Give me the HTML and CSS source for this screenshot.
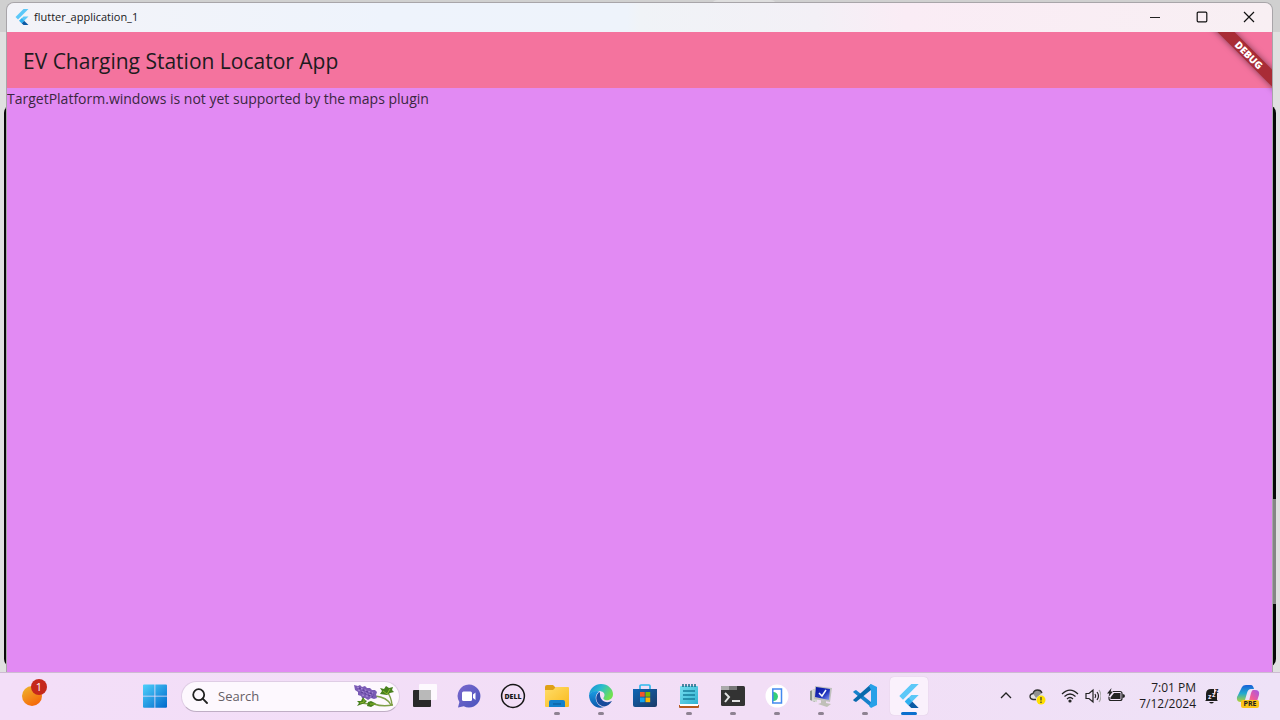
FILE: index.html
```html
<!DOCTYPE html>
<html lang="en">
<head>
<meta charset="utf-8">
<meta name="viewport" content="width=device-width, initial-scale=1">
<title>flutter_application_1</title>
<link rel="stylesheet" href="styles.css">
</head>
<body>
<svg class="defs" width="0" height="0" aria-hidden="true">
  <defs>
    <symbol id="flutter" viewBox="0 0 24 24">
      <path fill="#5cc8f8" d="M14.3 0 2.3 12 6 15.700 21.700 0zM14.300 11.100 7.800 17.500 11.500 21.200 21.700 11.100z"/>
      <path fill="#0b5aa5" d="M11.500 21.200 14.300 24h7.400l-6.500-6.500z"/>
      <path fill="#2fb0f0" d="M7.800 17.500l3.700-3.700 3.700 3.700-3.700 3.700z"/>
    </symbol>
    <linearGradient id="gWin" x1="0" y1="0" x2="1" y2="1"><stop offset="0" stop-color="#4fd0fb"/><stop offset="1" stop-color="#0069cc"/></linearGradient>
    <linearGradient id="gSun" x1="0" y1="0" x2=".6" y2="1"><stop offset="0" stop-color="#eeb92f"/><stop offset="1" stop-color="#f5680a"/></linearGradient>
    <linearGradient id="gChat" x1="0" y1="0" x2="1" y2="1"><stop offset="0" stop-color="#7b68cd"/><stop offset="1" stop-color="#4854bd"/></linearGradient>
    <linearGradient id="gFolder" x1="0" y1="0" x2="1" y2="1"><stop offset="0" stop-color="#ffdd69"/><stop offset="1" stop-color="#fab91c"/></linearGradient>
    <linearGradient id="gEdge" x1="0" y1="0" x2="1" y2=".5"><stop offset="0" stop-color="#1687d9"/><stop offset=".5" stop-color="#2bbccd"/><stop offset="1" stop-color="#70e052"/></linearGradient>
    <linearGradient id="gEdge2" x1="0" y1="0" x2="0" y2="1"><stop offset="0" stop-color="#1b9de2"/><stop offset="1" stop-color="#0b56ab"/></linearGradient>
    <linearGradient id="gStore" x1="0" y1="0" x2="1" y2="1"><stop offset="0" stop-color="#0f65b5"/><stop offset="1" stop-color="#1b3a67"/></linearGradient>
    <linearGradient id="gNote" x1="0" y1="0" x2="1" y2="1"><stop offset="0" stop-color="#78def0"/><stop offset="1" stop-color="#2bb0cf"/></linearGradient>
    <linearGradient id="gScreen" x1="0" y1="0" x2="1" y2="1"><stop offset="0" stop-color="#0713a0"/><stop offset=".6" stop-color="#1f34bd"/><stop offset="1" stop-color="#8c9df5"/></linearGradient>
    <linearGradient id="gCoA" x1="0" y1="0" x2="0" y2="1"><stop offset="0" stop-color="#1660d9"/><stop offset=".5" stop-color="#23a9ce"/><stop offset="1" stop-color="#b7d331"/></linearGradient>
    <linearGradient id="gCoB" x1="1" y1="0" x2="0" y2="1"><stop offset="0" stop-color="#a458e8"/><stop offset=".5" stop-color="#ee5b9a"/><stop offset="1" stop-color="#ff9b52"/></linearGradient>
  </defs>
</svg>

<div class="desktop">
  <div class="backdrop-bar"></div>
  <div class="backdrop-tab"></div>
  <div class="backdrop-frame"></div>
  <div class="backdrop-thumb"></div>

  <main class="window">
    <header class="titlebar">
      <svg class="title-icon" aria-hidden="true"><use href="#flutter"/></svg>
      <span class="title-text">flutter_application_1</span>
      <div class="caption-buttons">
        <button class="caption" aria-label="Minimize"><svg width="12" height="12" viewBox="0 0 12 12"><path d="M1 6.500h10" stroke="#222"/></svg></button>
        <button class="caption" aria-label="Maximize"><svg width="12" height="12" viewBox="0 0 12 12"><rect x="1.200" y="1.200" width="9.600" height="9.600" rx="1" fill="none" stroke="#111" stroke-width="1.200"/></svg></button>
        <button class="caption" aria-label="Close"><svg width="12" height="12" viewBox="0 0 12 12"><path d="M1 1l10 10M11 1 1 11" stroke="#111" stroke-width="1.200"/></svg></button>
      </div>
    </header>
    <section class="app">
      <header class="appbar"><h1 class="app-title">EV Charging Station Locator App</h1></header>
      <p class="message">TargetPlatform.windows is not yet supported by the maps plugin</p>
      <div class="banner-clip"><span class="banner">DEBUG</span></div>
    </section>
  </main>
</div>

<footer class="taskbar">
  <button class="widgets" aria-label="Widgets">
    <svg width="22" height="22" viewBox="0 0 22 22"><circle cx="11" cy="11" r="10" fill="url(#gSun)"/></svg>
    <span class="badge">1</span>
  </button>

  <nav class="pinned">
    <button class="task" aria-label="Start"><svg width="24" height="24" viewBox="0 0 24 24"><path fill="url(#gWin)" d="M0 1.500Q0 .500 1 .500h10.500v11.200H0zM12.300.500H23q1 0 1 1v10.200H12.300zM0 12.500h11.500v11.200H1q-1 0-1-1zM12.300 12.500H24v10.200q0 1-1 1H12.300z"/></svg></button>

    <label class="search">
      <svg width="16" height="16" viewBox="0 0 16 16" fill="none" stroke="#202020" stroke-width="1.800"><circle cx="6.700" cy="6.700" r="5.500"/><path d="m10.700 10.700 4.300 4.300" stroke-linecap="round"/></svg>
      <input class="search-input" type="text" placeholder="Search" aria-label="Search">
      <svg width="42" height="24" viewBox="0 0 42 24">
        <path d="M22 12Q34 13 38 21M39 21Q38 12 34 8M40 21Q29 23 21 20Q14 20 8 19" fill="none" stroke="#7fa048" stroke-width="1.400"/>
        <path d="M1 1 5 2 7 1 9 3 12 2 14 4 17 4 19 6 22 6 24 8 23 11 24 14 21 15 18 14 15 16 12 14 9 14 8 12 5 11 5 8 2 6z" fill="#7a5bb5"/>
        <path d="M4 3 20 9M5 6l13 5M9 11l9 2" stroke="#a98bd6" stroke-width="1.200" stroke-dasharray="2 2"/>
        <path d="M6 4 21 11M8 8l12 5" stroke="#5b3f97" stroke-width="1.200" stroke-dasharray="2 2"/>
        <path d="M34 11 27 10l2-3-2-3 4 1 2-3 3 2 4-1-1 3 2 2-4 1zM12 19l-8 3 2-3-2-2 4 0 2-4 2 3 2 1zM15 18l3-1 4 2 1 1-5 3-4-1z" fill="#47801d"/>
        <path d="M30 7l4 3 3-5M7 19l4-1 0-3M17 20h5" fill="none" stroke="#8fb62f"/>
      </svg>
    </label>

    <button class="task" aria-label="Task view"><svg width="26" height="26" viewBox="0 0 26 26"><rect x="1" y="7" width="18" height="17" rx="1" fill="#292929"/><rect x="7" y="1" width="18" height="16" rx="1" fill="#fff" fill-opacity=".82"/><path d="M7 7h12v10H7z" fill="#b9b9b9"/></svg></button>
    <button class="task" aria-label="Chat"><svg width="24" height="24" viewBox="0 0 24 24"><path fill="url(#gChat)" d="M12 .500a11.500 11.500 0 1 1-5.200 21.800L1 23.500l1.400-5.400A11.500 11.500 0 0 1 12 .500z"/><rect x="5" y="7.500" width="10" height="9.500" rx="1.500" fill="#fff"/><path d="m16 10.500 2.500-2v7.500L16 14z" fill="#fff"/></svg></button>
    <button class="task" aria-label="Dell"><svg width="26" height="26" viewBox="0 0 26 26"><circle cx="13" cy="13" r="11.400" fill="none" stroke="#161616" stroke-width="1.500"/><text class="dell" x="13" y="16" text-anchor="middle">DELL</text></svg></button>
    <button class="task is-running" aria-label="File Explorer"><svg width="26" height="26" viewBox="0 0 26 26"><path fill="#dfa016" d="M1 4q0-2 2-2h6l3 3v4H1z"/><path fill="url(#gFolder)" d="M1 7h8l3-3h12q1 0 1 1v18q0 1-1 1H2q-1 0-1-1z"/><path fill="#1480cc" d="M5 24v-5q0-2 2-2h12q2 0 2 2v5z"/><path fill="none" stroke="#0a5591" d="M9 21h8"/></svg></button>
    <button class="task is-running" aria-label="Edge"><svg width="26" height="26" viewBox="0 0 26 26"><path fill="url(#gEdge)" d="M1 12C2 5 7 1 13 1c7 0 12 5 12 10 0 5-4 7-8 6-2-1-2-2-1-3 2-4-2-6-5-6-4 0-8 1-10 4z"/><path fill="url(#gEdge2)" d="M1 12c2-4 8-5 11-3-3 0-5 4-4 8 1 4 4 7 8 7C8 27 1 20 1 12z"/><path fill="#174b9b" d="M12 9c-5 2-5 10 0 13 4 3 9 1 12-4-6 3-13 0-12-9z"/></svg></button>
    <button class="task" aria-label="Microsoft Store"><svg width="26" height="26" viewBox="0 0 26 26"><path fill="none" stroke="#30b9ed" stroke-width="1.700" d="M8 8V3q0-1 1-1h8q1 0 1 1v5"/><path fill="url(#gStore)" d="M1 6h24v16q0 2-2 2H3q-2 0-2-2z"/><path fill="#f2552c" d="M8 9h4.700v4.700H8z"/><path fill="#7eb900" d="M13.500 9h4.700v4.700h-4.700z"/><path fill="#12a4ec" d="M8 14.500h4.700v4.700H8z"/><path fill="#fdb900" d="M13.500 14.500h4.700v4.700h-4.700z"/></svg></button>
    <button class="task is-running" aria-label="Notepad"><svg width="22" height="26" viewBox="0 0 22 26"><rect x="2" y="3" width="18" height="20" rx="1" fill="url(#gNote)"/><path fill="#b55a1d" d="M1 22h20v2q0 1-1 1H2q-1 0-1-1z"/><path fill="#fff" d="M2 21h18v2H2z"/><path d="M5 1v3M8 1v3M11 1v3M14 1v3M17 1v3" stroke="#166985" stroke-width="1.500"/><path d="M5 8h12M5 12h12M5 16h12" stroke="#177e9c" stroke-width="1.400"/></svg></button>
    <button class="task is-running" aria-label="Terminal"><svg width="26" height="26" viewBox="0 0 26 26"><rect x="1" y="3" width="24" height="20" rx="1.500" fill="#333"/><path fill="#aaa" d="M1 7V4q0-1 1-1h7v4z"/><path fill="#777" d="M9 3h8v4H9z"/><path d="m5 10 4 4-4 5M12 18h8" fill="none" stroke="#e2e2e2" stroke-width="2"/></svg></button>
    <button class="task is-running" aria-label="Device emulator"><svg width="24" height="24" viewBox="0 0 24 24"><circle cx="12" cy="12" r="11.500" fill="#fff"/><path fill="#35cf77" d="M8 8a5 5 0 0 1 5 4.500A5 5 0 0 1 8 17z"/><rect x="7.800" y="5" width="8.700" height="14" fill="none" stroke="#4389ef" stroke-width="1.500"/></svg></button>
    <button class="task is-running" aria-label="Remote desktop"><svg width="24" height="24" viewBox="0 0 24 24"><path fill="#8a968c" d="M1 7 6 5V18L1 16z"/><path fill="#d3d6d0" d="M3 6 8 4V18L3 17z"/><path fill="#bfc0bd" d="M6 2 23 4 21 18 5 15z"/><path fill="url(#gScreen)" d="M7 3 21 5 20 16 6 13z"/><path fill="#c0c0b8" d="M12 16 17 17 17 19 22 20 18 23 9 20 12 19z"/><path d="M10 9 13 12 17 6" fill="none" stroke="#f8faff" stroke-width="1.500"/></svg></button>
    <button class="task is-running" aria-label="Visual Studio Code"><svg width="26" height="26" viewBox="0 0 26 26"><path fill="#1681cb" d="m2 8 2-1 15 12v5L1 9z"/><path fill="#0869ac" d="m1 17 18-16v6L4 19l-2-1z"/><path fill="#28a1e8" d="m19 1 6 3v18l-6 3-2-2 2-4V7l-2-4z"/></svg></button>
    <button class="task is-running is-active" aria-label="flutter_application_1"><svg width="24" height="24"><use href="#flutter"/></svg></button>
  </nav>

  <div class="tray">
    <button class="tray-button" aria-label="Show hidden icons"><svg width="14" height="14" viewBox="0 0 14 14"><path d="m2 9 5-5 5 5" fill="none" stroke="#222" stroke-width="1.300"/></svg></button>
    <button class="tray-button cloud" aria-label="OneDrive"><svg width="17" height="18" viewBox="0 0 17 18"><path d="M4 12.500Q1 12 1 9.500T4 6.500Q5 3 8.500 3 12 3 13 6q3 1 2 5l-3 1.500z" fill="#e6e2e8"/><path d="M4 6.500Q5 3 8.500 3 12 3 13 6L7 11z" fill="#929292"/><path d="M7 12.500H4Q1 12 1 9.500T4 6.500Q5 3 8.500 3 12 3 13 6" fill="none" stroke="#333" stroke-width="1.300"/><circle cx="12" cy="13" r="4.500" fill="#ffe000"/><path d="M12 10v3.500M12 14.500V16" stroke="#333" stroke-width="1.200"/></svg></button>
    <button class="quick" aria-label="Network, volume and battery">
      <svg width="18" height="16" viewBox="0 0 18 16" fill="none" stroke="#222" stroke-width="1.200"><path d="M1 6q8-8 16 0M3.500 8.500q5.500-5 11 0M6 11q3-3 6 0"/><circle cx="9" cy="13" r="1" fill="#222"/></svg>
      <svg width="16" height="16" viewBox="0 0 16 16" fill="none" stroke="#222" stroke-width="1.200"><path d="M1 5.500h3L8 2v12l-4-3.500H1zM10 6q1.500 2 0 4M12 4q3 4 0 8"/><path d="M14 2q4 6 0 12" stroke="#aaa"/></svg>
      <svg width="18" height="16" viewBox="0 0 18 16"><path d="M6 3.500h7q2 0 2 2v5q0 2-2 2H4q-2 0-2-2V9" fill="none" stroke="#222" stroke-width="1.200"/><path fill="#222" d="M7 5h6.500v6H3.500V9.500zM15.500 6Q18 6 18 8t-2.500 2zM4.500 0 0 5.500h2.300L1.500 9 6 3.500H3.700z"/></svg>
    </button>
    <button class="clock"><span>7:01 PM</span><span>7/12/2024</span></button>
    <button class="tray-button bell" aria-label="Notifications, do not disturb"><svg width="16" height="18" viewBox="0 0 16 18"><path fill="#1c1c1c" d="M2 13V7q0-5 5-5h3v4h3v7l1 1H1zM5 15h5q-2.500 3-5 0z"/><text class="snooze snooze-light" x="4" y="12">z</text><text class="snooze snooze-light" x="8" y="10">z</text><text class="snooze" x="11" y="6">z</text></svg></button>
    <button class="tray-button copilot" aria-label="Copilot"><svg width="24" height="24" viewBox="0 0 24 24"><path fill="url(#gCoA)" d="M6 3q1-2 4-2h5q2 0 3 4h-3q-3 0-4 4l-2 7q-1 2-4 2-5 0-4-5z"/><path fill="url(#gCoB)" d="M17 6h2q5 0 4 5l-2 6q-1 4-5 4H9q3 0 4-4l2-8q1-3 2-3z"/></svg><span class="pre">PRE</span></button>
  </div>
</footer>
</body>
</html>
```
FILE: styles.css
```css
* { box-sizing: border-box; }

body {
  margin: 0;
  min-height: 100vh;
  display: flex;
  flex-direction: column;
  font-family: "Open Sans", "Noto Sans", sans-serif;
  color: #1d1b20;
}

button {
  border: 0;
  padding: 0;
  background: none;
  font: inherit;
  color: inherit;
}

svg { display: block; flex: none; }
.defs { position: absolute; }

.desktop {
  position: relative;
  flex: 1;
  display: flex;
  padding: 2px 7px 0 6px;
  background: #e0e0e0;
  overflow: hidden;
}

/* Parts of the window that lies behind */
.backdrop-bar {
  position: absolute;
  inset: 0 0 auto;
  height: 32px;
  background: #d0d0d0;
}
.backdrop-tab {
  position: absolute;
  top: 0;
  left: 710px;
  width: 68px;
  height: 8px;
  border-radius: 8px 8px 0 0;
  background: #dedede;
}
.backdrop-frame {
  position: absolute;
  inset: 105px 4px 5px;
  border-radius: 8px;
  background: #080808;
}
.backdrop-thumb {
  position: absolute;
  right: 4px;
  bottom: 68px;
  width: 4px;
  height: 105px;
  background: #858585;
}

.window {
  position: relative;
  flex: 1;
  display: flex;
  flex-direction: column;
  border: 1px solid #a8a5a9;
  border-bottom: 0;
  border-radius: 8px 8px 0 0;
  overflow: hidden;
}
.titlebar {
  height: 29px;
  display: flex;
  align-items: center;
  padding: 0 0 2px 7px;
  background: linear-gradient(90deg, #f3f3f8 0%, #eef3fc 30%, #eef3fb 49%, #f0f3f7 50%, #f3f0f6 64%, #faecf5 71%, #f8eff3 100%);
}
.title-icon { width: 16px; height: 16px; }
.title-text {
  margin-left: 4px;
  font-size: 11px;
  line-height: 16px;
  color: #191919;
}
.caption-buttons { margin-left: auto; display: flex; }
.caption {
  width: 47px;
  height: 27px;
  display: grid;
  place-items: center;
}

.app {
  position: relative;
  flex: 1;
  background: #e28af3;
  overflow: hidden;
}
.appbar {
  height: 56px;
  display: flex;
  align-items: center;
  padding: 2px 16px 0;
  background: #f4739e;
}
.app-title {
  margin: 0;
  font-size: 21px;
  font-weight: 400;
  line-height: 28px;
}
.message {
  margin: 0;
  padding-top: 1px;
  font-size: 14px;
  line-height: 20px;
  color: #3b2740;
}
.banner-clip {
  position: absolute;
  top: 0;
  right: 0;
  width: 80px;
  height: 80px;
  overflow: hidden;
}
.banner {
  position: absolute;
  top: 17px;
  right: -29px;
  width: 104px;
  height: 12px;
  transform: rotate(45deg);
  background: #a92c36;
  box-shadow: 0 0 6px rgba(0, 0, 0, 0.5);
  color: #fff;
  font-size: 10px;
  font-weight: 800;
  line-height: 12px;
  text-align: center;
}

.taskbar {
  height: 48px;
  display: flex;
  align-items: center;
  padding-bottom: 1px;
  border-top: 1px solid #cdbbd2;
  background: linear-gradient(90deg, #f3def8, #f2def6 60%, #eee2f7);
}
.widgets {
  position: relative;
  width: 133px;
  height: 46px;
  display: flex;
  align-items: center;
  padding-left: 21px;
}
.badge {
  position: absolute;
  top: 6px;
  left: 31px;
  width: 16px;
  height: 16px;
  border-radius: 50%;
  background: #c5281c;
  color: #fff;
  font-size: 11px;
  line-height: 16px;
  text-align: center;
}
.pinned { display: flex; align-items: center; }
.task {
  position: relative;
  width: 44px;
  height: 46px;
  display: grid;
  place-items: center;
}
.task svg { position: relative; }
.is-running::after {
  content: "";
  position: absolute;
  left: 19px;
  bottom: 4px;
  width: 6px;
  height: 3px;
  border-radius: 2px;
  background: #8e8292;
}
.is-active::before {
  content: "";
  position: absolute;
  inset: 4px 3px;
  border-radius: 4px;
  background: #faf1fc;
  box-shadow: 0 0 1px #c8b5ce;
}
.is-active::after {
  left: 14px;
  width: 16px;
  background: #0b6fce;
}
.dell {
  font-size: 7px;
  font-weight: 800;
  fill: #161616;
}
.search {
  width: 219px;
  height: 31px;
  margin: 0 3px 0 4px;
  padding: 0 4px 0 10px;
  display: flex;
  align-items: center;
  border: 1px solid #dfcde5;
  border-bottom-color: #bfaec5;
  border-radius: 16px;
  background: #fdf8fe;
}
.search-input {
  flex: 1;
  min-width: 0;
  margin-left: 10px;
  padding: 0;
  border: 0;
  outline: 0;
  background: none;
  font: 13px/20px "Open Sans", "Noto Sans", sans-serif;
}
.search-input::placeholder { color: #666066; opacity: 1; }

.tray {
  margin-left: auto;
  padding-right: 20px;
  display: flex;
  align-items: center;
}
.tray-button {
  position: relative;
  height: 40px;
  display: grid;
  place-items: center;
}
.cloud { margin-left: 16px; }
.quick { display: flex; gap: 6px; margin-left: 15px; }
.clock {
  width: 56px;
  margin-left: 15px;
  display: flex;
  flex-direction: column;
  align-items: flex-end;
  font-size: 12px;
  line-height: 16px;
  white-space: nowrap;
}
.bell { margin-left: 8px; }
.snooze {
  font-size: 7px;
  font-weight: 700;
  fill: #1c1c1c;
}
.snooze-light { fill: #f2e2f6; }
.copilot { margin-left: 16px; }
.pre {
  position: absolute;
  left: 5px;
  bottom: 8px;
  width: 18px;
  border-radius: 2px;
  background: #fcc419;
  color: #222;
  font-size: 7px;
  font-weight: 700;
  line-height: 8px;
  text-align: center;
}
```
